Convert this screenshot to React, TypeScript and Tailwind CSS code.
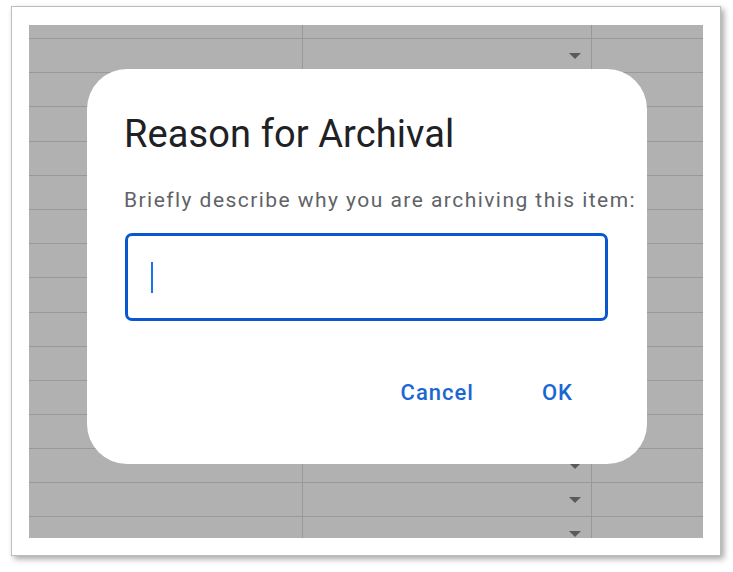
const rowHeights = [34, 34, 34, 35, 34, 34, 34, 34, 35, 34, 34, 34, 34, 34, 34, 34];

function Arrow() {
  return (
    <svg width="12" height="6" viewBox="0 0 12 6" className="block">
      <path d="M0 0 L12 0 L6 6 Z" fill="#5a5a5a" />
    </svg>
  );
}

function SheetGrid() {
  return (
    <div className="-mt-[20px] flex flex-col">
      {rowHeights.map((h, i) => (
        <div
          key={i}
          className="flex border-b border-[#999999]"
          style={{ height: h }}
        >
          <div className="w-[274px] border-r border-[#999999]" />
          <div className="w-[289px] border-r border-[#999999] flex items-center justify-end pr-[10px]">
            <Arrow />
          </div>
          <div className="flex-1" />
        </div>
      ))}
    </div>
  );
}

function ArchiveDialog() {
  return (
    <div className="absolute left-[58px] top-[44px] w-[560px] h-[395px] bg-white rounded-[40px] flex flex-col pt-[46px] pl-[37px] pr-[39px]">
      <h2 className="text-[38px] leading-[38px] text-[#202124] font-normal tracking-[0.1px]">
        Reason for Archival
      </h2>
      <p className="mt-[37px] text-[21px] leading-[20px] text-[#5f6368] tracking-[1.45px] whitespace-nowrap">
        Briefly describe why you are archiving this item:
      </p>
      <div className="mt-[23px] ml-[1px] h-[88px] border-[3px] border-[#0b57d0] rounded-[7px] flex items-center pl-[23px]">
        <div className="w-[2px] h-[31px] bg-[#1a73e8]" />
      </div>
      <div className="mt-[61px] flex justify-end gap-[68px] pr-[35px]">
        <button className="text-[22px] leading-[22px] font-medium tracking-[1px] text-[#1a67d4]">Cancel</button>
        <button className="text-[22px] leading-[22px] font-medium tracking-[1px] text-[#1a67d4]">OK</button>
      </div>
    </div>
  );
}

export default function App() {
  return (
    <div
      className="w-[733px] h-[572px] bg-white pt-[6px] pl-[11px]"
      style={{ fontFamily: "Roboto, 'Noto Sans', sans-serif" }}
    >
      <div className="w-[710px] h-[550px] bg-white border border-[#bdbdbd] shadow-[3px_3px_6px_rgba(0,0,0,0.35)] pt-[18px] pl-[17px]">
        <div className="relative w-[674px] h-[513px] bg-[#b1b1b1] overflow-hidden">
          <SheetGrid />
          <ArchiveDialog />
        </div>
      </div>
    </div>
  );
}
